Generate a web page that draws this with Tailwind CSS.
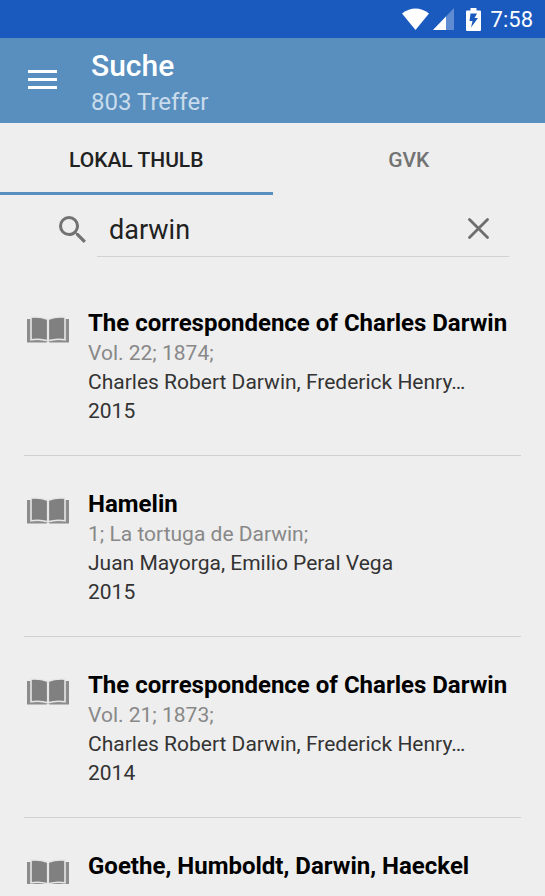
<!DOCTYPE html>
<html lang="de">
<head>
<meta charset="utf-8">
<meta name="viewport" content="width=device-width, initial-scale=1">
<title>Suche</title>
<script src="https://cdn.jsdelivr.net/npm/@tailwindcss/browser@4"></script>
</head>
<body class="flex h-screen flex-col overflow-hidden bg-[#eeeeee] font-['Roboto',sans-serif] text-[#212121]">
<svg class="hidden" aria-hidden="true">
  <symbol id="book" viewBox="0 0 42 27">
    <path fill="#8c8c8c" d="M0 3h4v20h34V3h4v23.500H22.500l-1.500-1-1.500 1H0z"/>
    <path fill="#808080" stroke="#e6e6e6" stroke-width="1.600" d="M4 1.200Q13 .4 20.700 3.200v21.600Q13 22.300 4 23.800zM38 1.200Q29 .4 21.300 3.200v21.600Q29 22.300 38 23.800z"/>
  </symbol>
</svg>

<div class="flex h-[38px] shrink-0 items-center justify-end bg-[#1a5abf] pr-3 text-white">
  <svg class="mr-1 h-[22px] w-[27px]" viewBox="0 0 27 22" aria-hidden="true"><path fill="#fff" d="M0 5.500Q13.500-4.500 27 5.500L13.500 22z"/></svg>
  <svg class="mr-3 h-[22px] w-[21px]" viewBox="0 0 21 22" aria-hidden="true"><path fill="#fff" fill-opacity=".3" d="M21 0v22H0z"/><path fill="#fff" d="M13 8.500V22H0z"/></svg>
  <svg class="mr-2.5 h-[23px] w-[15px]" viewBox="0 0 15 23" aria-hidden="true"><path fill="#fff" fill-rule="evenodd" d="M4.500 0h6v2.500H14q1 0 1 1V22q0 1-1 1H1q-1 0-1-1V3.500q0-1 1-1h3.500zM4.500 5.500L3.500 13h3L5 19.500 12 10H8.500l2.500-4.500z"/></svg>
  <span class="pt-0.5 text-[22px] leading-6">7:58</span>
</div>

<header class="flex h-[85px] shrink-0 items-center bg-[#588fbf] text-white">
  <button type="button" aria-label="Menü" class="mr-[34px] mb-0.5 ml-7 flex h-10 w-[29px] items-center justify-center">
    <svg class="h-5 w-[29px]" viewBox="0 0 29 20" aria-hidden="true"><path fill="#fff" d="M0 0h29v3H0zM0 8h29v3H0zM0 16h29v3H0z"/></svg>
  </button>
  <div class="pt-1.5">
    <h1 class="text-[30px] leading-9 font-medium">Suche</h1>
    <p class="text-2xl leading-9 text-white/70">803 Treffer</p>
  </div>
</header>

<nav class="grid h-[72px] shrink-0 grid-cols-2 text-[21px] font-medium">
  <a href="#lokal" aria-current="page" class="flex items-center justify-center border-b-3 border-[#588fbf] pt-1.5">LOKAL THULB</a>
  <a href="#gvk" class="flex items-center justify-center border-b-3 border-transparent pt-1.5 text-[#727272]">GVK</a>
</nav>

<form class="mr-9 ml-[59px] flex h-[62px] shrink-0" role="search">
  <label for="query" class="flex w-[38px] items-center" aria-label="Suchbegriff">
    <svg class="mt-1.5 h-[27px] w-[27px]" viewBox="3 3 17.500 17.500" aria-hidden="true"><path fill="#727272" d="M15.500 14h-.79l-.28-.27A6.470 6.470 0 0 0 16 9.500 6.500 6.500 0 1 0 9.500 16c1.610 0 3.090-.59 4.230-1.570l.27.28v.79l5 4.990L20.490 19l-4.990-5zm-6 0C7.010 14 5 11.990 5 9.500S7.010 5 9.500 5 14 7.010 14 9.500 11.990 14 9.500 14z"/></svg>
  </label>
  <div class="flex min-w-0 flex-1 items-center border-b border-[#d2d2d2] pt-2 pr-5 pl-3">
    <input id="query" type="text" value="darwin" class="min-w-0 flex-1 bg-transparent text-[27px] leading-8 outline-none">
    <button type="button" aria-label="Eingabe löschen" class="mb-0.5 flex size-[21px]">
      <svg class="size-[21px]" viewBox="0 0 21 21" aria-hidden="true"><path stroke="#6e6e6e" stroke-width="2.800" stroke-linecap="round" d="M1.500 1.500l18 18M19.500 1.500l-18 18"/></svg>
    </button>
  </div>
</form>

<main class="mx-6 mt-[18px] mb-3 min-h-0 flex-1 overflow-hidden text-[21px] leading-[29px] text-[#333333]">
  <ul class="divide-y divide-[#d0d0d0]">
    <li class="flex pt-[33px] pb-[29px]">
      <svg class="mt-2 mr-[19px] ml-[3px] h-[27px] w-[42px] shrink-0" aria-hidden="true"><use href="#book"/></svg>
      <div class="min-w-0 flex-1">
        <h2 class="truncate text-2xl leading-[31px] font-bold text-black">The correspondence of Charles Darwin</h2>
        <p class="truncate text-[#888888]">Vol. 22; 1874;</p>
        <p class="truncate">Charles Robert Darwin, Frederick Henry…</p>
        <p>2015</p>
      </div>
    </li>
    <li class="flex pt-[33px] pb-[29px]">
      <svg class="mt-2 mr-[19px] ml-[3px] h-[27px] w-[42px] shrink-0" aria-hidden="true"><use href="#book"/></svg>
      <div class="min-w-0 flex-1">
        <h2 class="truncate text-2xl leading-[31px] font-bold text-black">Hamelin</h2>
        <p class="truncate text-[#888888]">1; La tortuga de Darwin;</p>
        <p class="truncate">Juan Mayorga, Emilio Peral Vega</p>
        <p>2015</p>
      </div>
    </li>
    <li class="flex pt-[33px] pb-[29px]">
      <svg class="mt-2 mr-[19px] ml-[3px] h-[27px] w-[42px] shrink-0" aria-hidden="true"><use href="#book"/></svg>
      <div class="min-w-0 flex-1">
        <h2 class="truncate text-2xl leading-[31px] font-bold text-black">The correspondence of Charles Darwin</h2>
        <p class="truncate text-[#888888]">Vol. 21; 1873;</p>
        <p class="truncate">Charles Robert Darwin, Frederick Henry…</p>
        <p>2014</p>
      </div>
    </li>
    <li class="flex pt-[33px] pb-[29px]">
      <svg class="mt-2 mr-[19px] ml-[3px] h-[27px] w-[42px] shrink-0" aria-hidden="true"><use href="#book"/></svg>
      <div class="min-w-0 flex-1">
        <h2 class="truncate text-2xl leading-[31px] font-bold text-black">Goethe, Humboldt, Darwin, Haeckel</h2>
      </div>
    </li>
  </ul>
</main>
</body>
</html>
